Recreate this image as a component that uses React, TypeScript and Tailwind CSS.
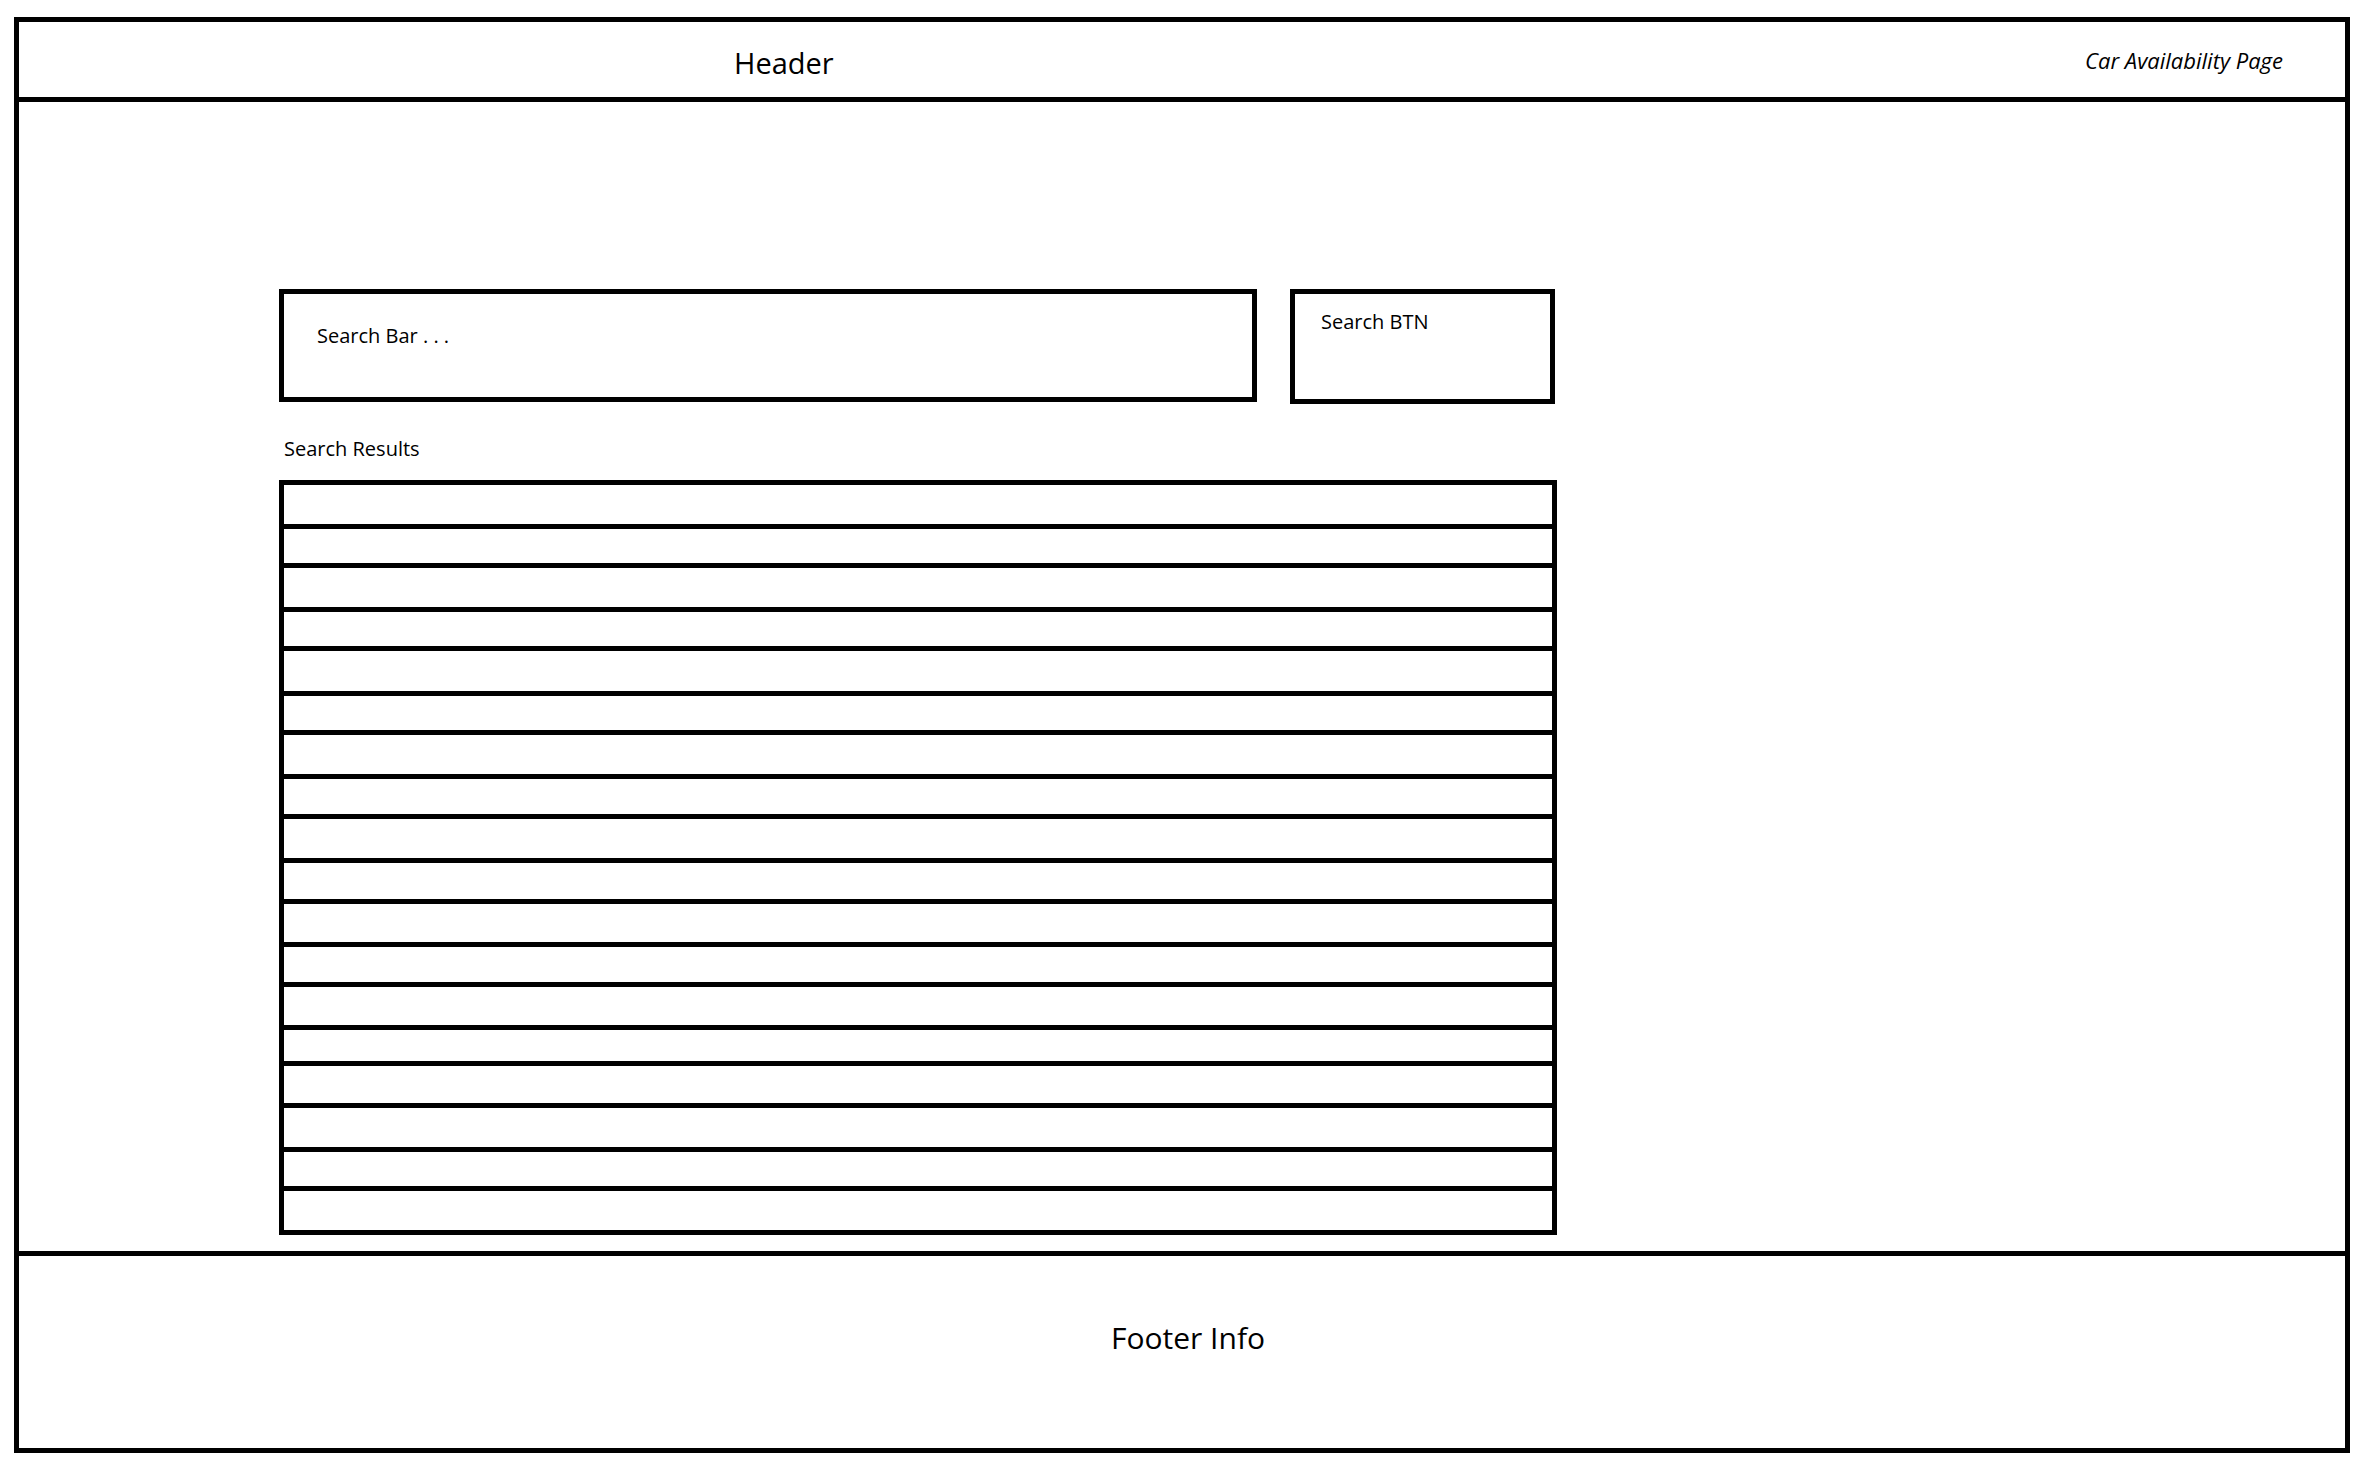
const font = { fontFamily: '"Open Sans", "Liberation Sans", sans-serif' };

// row pitches per boxed group (px incl. the 5px top rule)
const groups: string[][] = [
  ['h-[44px]', 'h-[39px]'],
  ['h-[44px]', 'h-[39px]'],
  ['h-[45px]', 'h-[39px]'],
  ['h-[44px]', 'h-[40px]'],
  ['h-[44px]', 'h-[41px]'],
  ['h-[43px]', 'h-[40px]'],
  ['h-[43px]', 'h-[36px]'],
  ['h-[42px]', 'h-[44px]', 'h-[39px]'],
  ['h-[44px]'],
];

export default function App() {
  return (
    <div className="w-[2358px] h-[1460px] bg-white text-black" style={font}>
      <div className="ml-[14px] mt-[17px] w-[2336px] h-[1436px] border-[5px] border-black flex flex-col">
        {/* Header */}
        <div className="h-[80px] border-b-[5px] border-black flex items-start">
          <div className="pl-[715px] pt-[20px] text-[29px] leading-[42px]">Header</div>
          <div className="ml-auto pr-[62px] pt-[22px] text-[22px] leading-[32px] italic">Car Availability Page</div>
        </div>

        {/* Main */}
        <div className="flex-1 pl-[260px] pt-[187px]">
          <div className="flex gap-[33px]">
            <div className="w-[978px] h-[113px] border-[5px] border-black pl-[33px] pt-[27px] text-[20px] leading-[30px]">
              Search Bar . . .
            </div>
            <div className="w-[265px] h-[115px] border-[5px] border-black pl-[26px] pt-[13px] text-[20px] leading-[30px]">
              Search BTN
            </div>
          </div>

          <div className="mt-[30px] pl-[5px] text-[20px] leading-[30px]">Search Results</div>

          <div className="mt-[16px] w-[1278px] flex flex-col">
            {groups.map((rows, gi) => (
              <div
                key={gi}
                className={
                  gi === groups.length - 1
                    ? 'border-x-[5px] border-b-[5px] border-black'
                    : 'border-x-[5px] border-black'
                }
              >
                {rows.map((h, ri) => (
                  <div key={ri} className={`${h} border-t-[5px] border-black`} />
                ))}
              </div>
            ))}
          </div>
        </div>

        {/* Footer */}
        <div className="h-[197px] border-t-[5px] border-black flex justify-center pl-[12px] pt-[59px]">
          <div className="text-[30px] leading-[45px]">Footer Info</div>
        </div>
      </div>
    </div>
  );
}
